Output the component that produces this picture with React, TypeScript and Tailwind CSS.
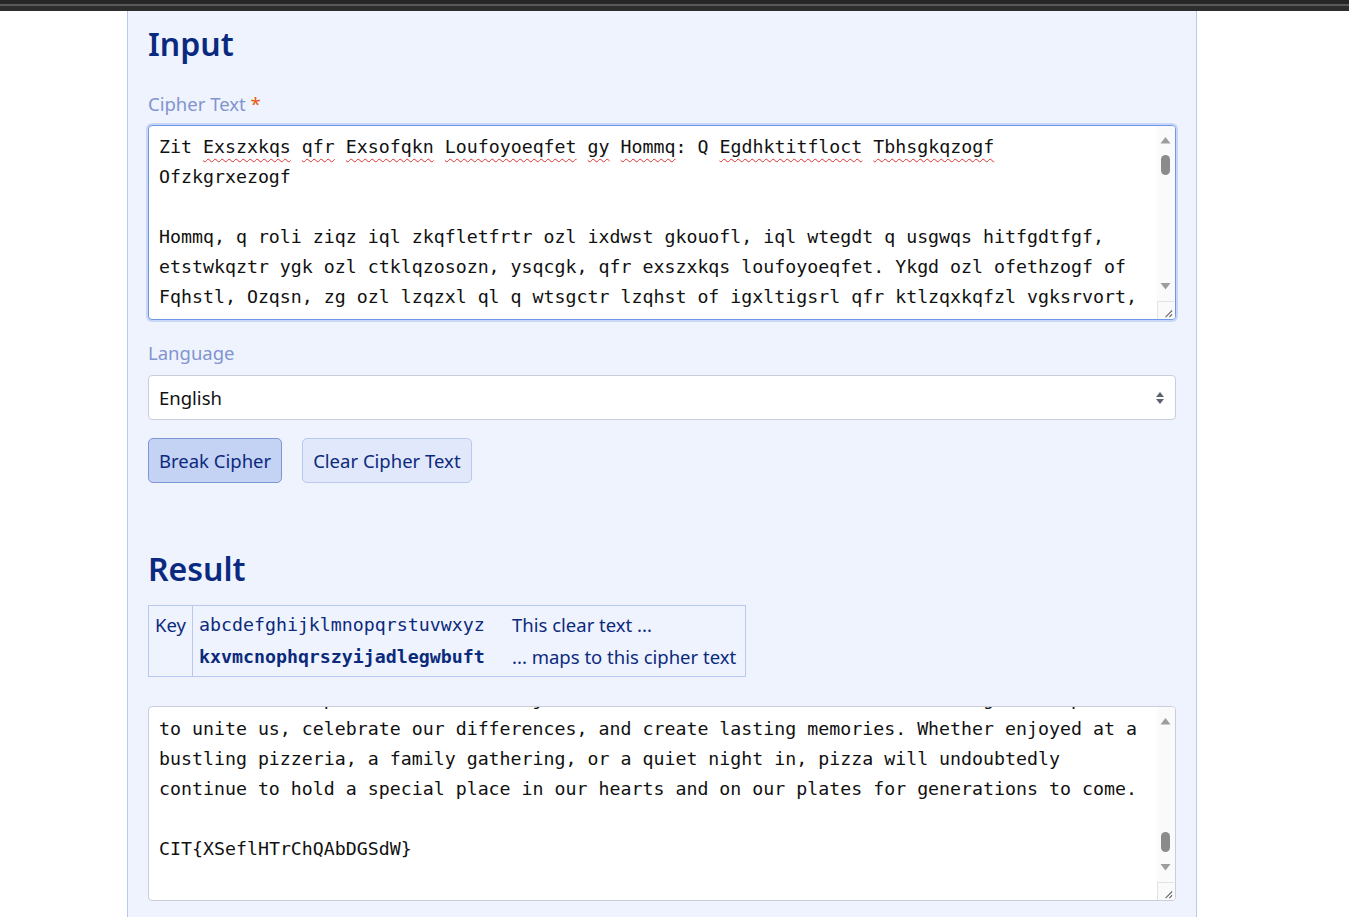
import React from 'react'

const mono = "font-['DejaVu_Sans_Mono',monospace] text-[18.25px] leading-[30px]"

function ScrollBar({ thumb }: { thumb: number }) {
  // thumb = top of thumb, relative to the textarea's inner top
  return (
    <div className="flex w-[18px] shrink-0 flex-col bg-[#fafafa] pr-[1px]">
      <svg width="17" height="175" viewBox="0 0 17 175">
        <polygon points="8.5,11 13.5,17.5 3.5,17.5" fill="#9d9d9d" />
        <rect x="4" y={thumb} width="9" height="20" rx="4.5" fill="#8b8b8b" />
        <polygon points="3.5,157 13.5,157 8.5,163.5" fill="#9d9d9d" />
      </svg>
      <svg width="17" height="18" viewBox="0 0 17 18" className="border-l border-t border-[#e2e2e2]">
        <path d="M8 16 L15 9 M12 16 L15 13" stroke="#6b6b6b" strokeWidth="1.2" />
      </svg>
    </div>
  )
}

function Area({ focused, children, thumb }: { focused?: boolean; children: React.ReactNode; thumb: number }) {
  return (
    <div
      className={
        'flex h-[195px] overflow-hidden rounded-[4px] border bg-white ' +
        (focused ? 'border-[#6f97e8] shadow-[0_0_0_2px_#c8d7f8]' : 'border-[#c9cedc]')
      }
    >
      <div className={'flex-1 overflow-hidden pl-[10px] text-[#111] whitespace-pre ' + mono}>{children}</div>
      <ScrollBar thumb={thumb} />
    </div>
  )
}

const W = ({ children }: { children: React.ReactNode }) => (
  <span className="underline decoration-wavy decoration-[#e03131] decoration-1 underline-offset-[5px]">{children}</span>
)

export default function App() {
  return (
    <div className="min-h-screen bg-white font-['Noto_Sans',sans-serif]">
      <div className="h-[4px] bg-[#262626]" />
      <div className="h-[2px] bg-[#595959]" />
      <div className="h-[5px] bg-[#2d2d2d]" />

      <div className="ml-[127px] w-[1070px] border-x border-[#b8c8f1] bg-[#eef3fe] px-[20px] pt-[13px] pb-[40px]">
        <h2 className="text-[32px] font-semibold leading-[40px] text-[#0a2a80]">Input</h2>

        <div className="mt-[27px] text-[18.5px] leading-[26px] text-[#8394cf]">
          Cipher Text <span className="text-[#e8590c]">*</span>
        </div>
        <div className="mt-[8px]">
          <Area focused thumb={29}>
            <div className="pt-[6px]">
              <div>
                Zit <W>Exszxkqs</W> <W>qfr</W> <W>Exsofqkn</W> <W>Loufoyoeqfet</W> <W>gy</W> <W>Hommq</W>: Q{' '}
                <W>Egdhktitfloct</W> <W>Tbhsgkqzogf</W>
              </div>
              <div>Ofzkgrxezogf</div>
              <div>&nbsp;</div>
              <div>Hommq, q roli ziqz iql zkqfletfrtr ozl ixdwst gkouofl, iql wtegdt q usgwqs hitfgdtfgf,</div>
              <div>etstwkqztr ygk ozl ctklqzosozn, ysqcgk, qfr exszxkqs loufoyoeqfet. Ykgd ozl ofethzogf of</div>
              <div>Fqhstl, Ozqsn, zg ozl lzqzxl ql q wtsgctr lzqhst of igxltigsrl qfr ktlzqxkqfzl vgksrvort,</div>
              <div>hommq iql ktlkrtr qfr lzqzxkt tbtkdb lgkz of 'hommtkoq' ofrtflgkt tnhktlzigfl ql dgkt.</div>
            </div>
          </Area>
        </div>

        <div className="mt-[20px] text-[18.5px] leading-[26px] text-[#8394cf]">Language</div>
        <div className="mt-[9px] flex h-[45px] items-center justify-between rounded-[4px] border border-[#c9cedc] bg-white pl-[10px] pr-[10px] text-[18.5px] text-[#111]">
          <span>English</span>
          <svg width="10" height="14" viewBox="0 0 10 14">
            <polygon points="5,1 9,6 1,6" fill="#5f6470" />
            <polygon points="1,8 9,8 5,13" fill="#5f6470" />
          </svg>
        </div>

        <div className="mt-[18px] flex gap-[20px]">
          <button className="h-[45px] rounded-[5px] border border-[#7f96d6] bg-[#c4d2f4] px-[10px] text-[18.5px] text-[#0c2a7c]">
            Break Cipher
          </button>
          <button className="h-[45px] rounded-[5px] border border-[#b9c8f1] bg-[#e1e8fb] px-[10px] text-[18.5px] text-[#0c2a7c]">
            Clear Cipher Text
          </button>
        </div>

        <h2 className="mt-[66px] text-[32px] font-semibold leading-[40px] text-[#0a2a80]">Result</h2>

        <div className="mt-[16px] flex w-[598px] border border-[#b8c8f1] text-[#0c2a7c]">
          <div className="w-[44px] border-r border-[#b8c8f1] pl-[6px] pt-[3px] text-[18.5px] leading-[32px]">Key</div>
          <div className="grid flex-1 grid-cols-[313px_1fr] pl-[6px] pt-[3px] pb-[3px] leading-[32px]">
            <span className={mono + ' leading-[32px]'}>abcdefghijklmnopqrstuvwxyz</span>
            <span className="text-[18.5px]">This clear text ...</span>
            <span className={mono + ' font-bold leading-[32px]'}>kxvmcnophqrszyijadlegwbuft</span>
            <span className="text-[18.5px]">... maps to this cipher text</span>
          </div>
        </div>

        <div className="mt-[29px]">
          <Area thumb={125}>
            <div className="-mt-[23px]">
              <div>In conclusion, pizza is more than just a meal; it is a rich cultural heritage with power</div>
              <div>to unite us, celebrate our differences, and create lasting memories. Whether enjoyed at a</div>
              <div>bustling pizzeria, a family gathering, or a quiet night in, pizza will undoubtedly</div>
              <div>continue to hold a special place in our hearts and on our plates for generations to come.</div>
              <div>&nbsp;</div>
              <div>CIT{'{'}XSeflHTrChQAbDGSdW{'}'}</div>
              <div>&nbsp;</div>
            </div>
          </Area>
        </div>
      </div>
    </div>
  )
}
